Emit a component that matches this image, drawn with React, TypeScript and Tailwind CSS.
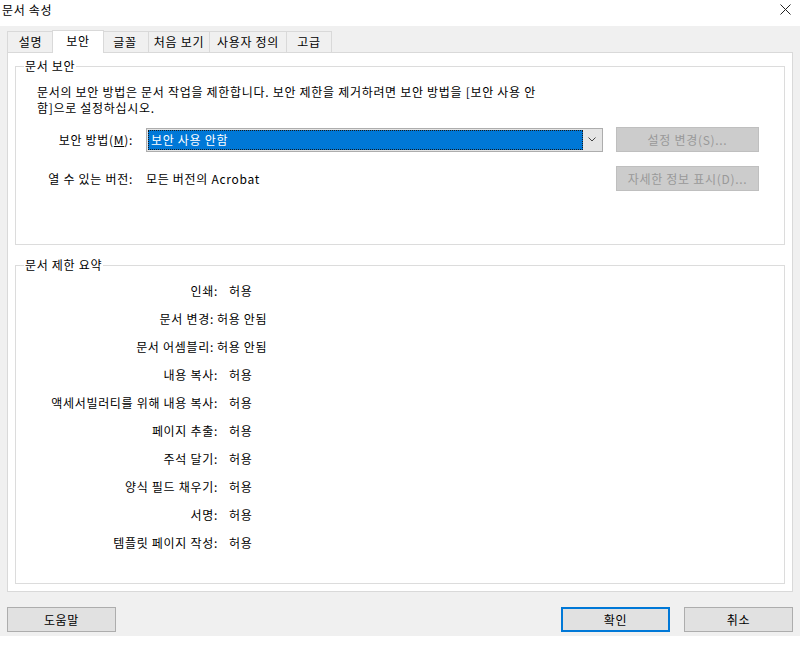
import React from "react";

const rows: { label: string; value: string; deny?: boolean }[] = [
  { label: "인쇄:", value: "허용" },
  { label: "문서 변경:", value: "허용 안됨", deny: true },
  { label: "문서 어셈블리:", value: "허용 안됨", deny: true },
  { label: "내용 복사:", value: "허용" },
  { label: "액세서빌러티를 위해 내용 복사:", value: "허용" },
  { label: "페이지 추출:", value: "허용" },
  { label: "주석 달기:", value: "허용" },
  { label: "양식 필드 채우기:", value: "허용" },
  { label: "서명:", value: "허용" },
  { label: "템플릿 페이지 작성:", value: "허용" },
];

function Tab({ label, w, selected, first }: { label: string; w: string; selected?: boolean; first?: boolean }) {
  if (selected) {
    return (
      <div
        className={`relative z-10 -mx-[2px] -mb-px h-[23px] ${w} bg-white border border-b-0 border-[#d9d9d9] flex items-start justify-center pt-[2px]`}
      >
        {label}
      </div>
    );
  }
  return (
    <div
      className={`h-[21px] ${w} bg-[#f0f0f0] border-t border-r ${first ? "border-l" : ""} border-[#d9d9d9] flex items-center justify-center`}
    >
      {label}
    </div>
  );
}

export default function App() {
  return (
    <div className="w-[800px] h-[648px] bg-white flex flex-col text-[12px] leading-[16px] tracking-[0.7px] text-black font-['Malgun_Gothic','Noto_Sans_CJK_KR',sans-serif]">
      {/* title bar */}
      <div className="h-[26px] flex items-center justify-between pl-[2px] pr-[9px] shrink-0">
        <span className="-mt-[6px]">문서 속성</span>
        <svg width="11" height="11" viewBox="0 0 11 11" className="-mt-[8px]">
          <path d="M0.5 0.5 L10.5 10.5 M10.5 0.5 L0.5 10.5" stroke="#222" strokeWidth="1" />
        </svg>
      </div>

      {/* body */}
      <div className="h-[610px] bg-[#f0f0f0] px-[7px] pt-[4px] flex flex-col shrink-0">
        {/* tabs */}
        <div className="flex items-end h-[22px]">
          <Tab label="설명" w="w-[47px]" first />
          <Tab label="보안" w="w-[52px]" selected />
          <Tab label="글꼴" w="w-[47px]" />
          <Tab label="처음 보기" w="w-[61px]" />
          <Tab label="사용자 정의" w="w-[77px]" />
          <Tab label="고급" w="w-[45px]" />
        </div>

        {/* panel */}
        <div className="h-[540px] bg-white border border-[#d9d9d9] px-[7px] pt-[13px] flex flex-col">
          {/* group 1 */}
          <div className="relative h-[179px] border border-[#dcdcdc] pt-[17px] flex flex-col">
            <span className="absolute -top-[9px] left-[8px] bg-white px-[1px]">문서 보안</span>
            <p className="pl-[21px]">
              문서의 보안 방법은 문서 작업을 제한합니다. 보안 제한을 제거하려면 보안 방법을 [보안 사용 안
              <br />
              함]으로 설정하십시오.
            </p>
            <div className="flex items-center mt-[11px]">
              <div className="w-[117px] text-right">
                보안 방법(<span className="underline">M</span>):
              </div>
              <div className="ml-[13px] w-[457px] h-[24px] border border-[#adadad] bg-[#e5e5e5] flex items-center p-[1px]">
                <div className="h-full w-[435px] bg-[#0078d7] border border-dotted border-[#1a1a1a] text-white pl-[2px] flex items-center">
                  보안 사용 안함
                </div>
                <div className="flex-1 flex items-center justify-center">
                  <svg width="8" height="5" viewBox="0 0 8 5">
                    <path d="M0.5 0.5 L4 4 L7.5 0.5" fill="none" stroke="#444" strokeWidth="1" />
                  </svg>
                </div>
              </div>
              <div className="ml-[13px] w-[143px] h-[25px] bg-[#cccccc] border border-[#bfbfbf] text-[#999999] flex items-center justify-center">
                설정 변경(S)...
              </div>
            </div>
            <div className="flex items-center mt-[14px]">
              <div className="w-[117px] text-right">열 수 있는 버전:</div>
              <div className="ml-[13px] w-[457px]">모든 버전의 Acrobat</div>
              <div className="ml-[13px] w-[143px] h-[25px] bg-[#cccccc] border border-[#bfbfbf] text-[#999999] flex items-center justify-center">
                자세한 정보 표시(D)...
              </div>
            </div>
          </div>

          {/* group 2 */}
          <div className="relative mt-[20px] h-[319px] border border-[#dcdcdc] pt-[11px] flex flex-col">
            <span className="absolute -top-[9px] left-[8px] bg-white px-[1px]">문서 제한 요약</span>
            {rows.map((r) => (
              <div key={r.label} className="h-[28px] flex items-center">
                <div className={`${r.deny ? "w-[198px]" : "w-[202px]"} text-right`}>{r.label}</div>
                <div className={r.deny ? "ml-[3px]" : "ml-[11px]"}>{r.value}</div>
              </div>
            ))}
          </div>
        </div>

        {/* buttons */}
        <div className="mt-[15px] flex items-center">
          <div className="w-[109px] h-[25px] bg-[#e1e1e1] border border-[#adadad] flex items-center justify-center">
            도움말
          </div>
          <div className="flex-1" />
          <div className="w-[109px] h-[25px] bg-[#e1e1e1] border-2 border-[#0078d7] flex items-center justify-center">
            확인
          </div>
          <div className="ml-[14px] w-[109px] h-[25px] bg-[#e1e1e1] border border-[#adadad] flex items-center justify-center">
            취소
          </div>
        </div>
      </div>
      <div className="flex-1 bg-white" />
    </div>
  );
}
